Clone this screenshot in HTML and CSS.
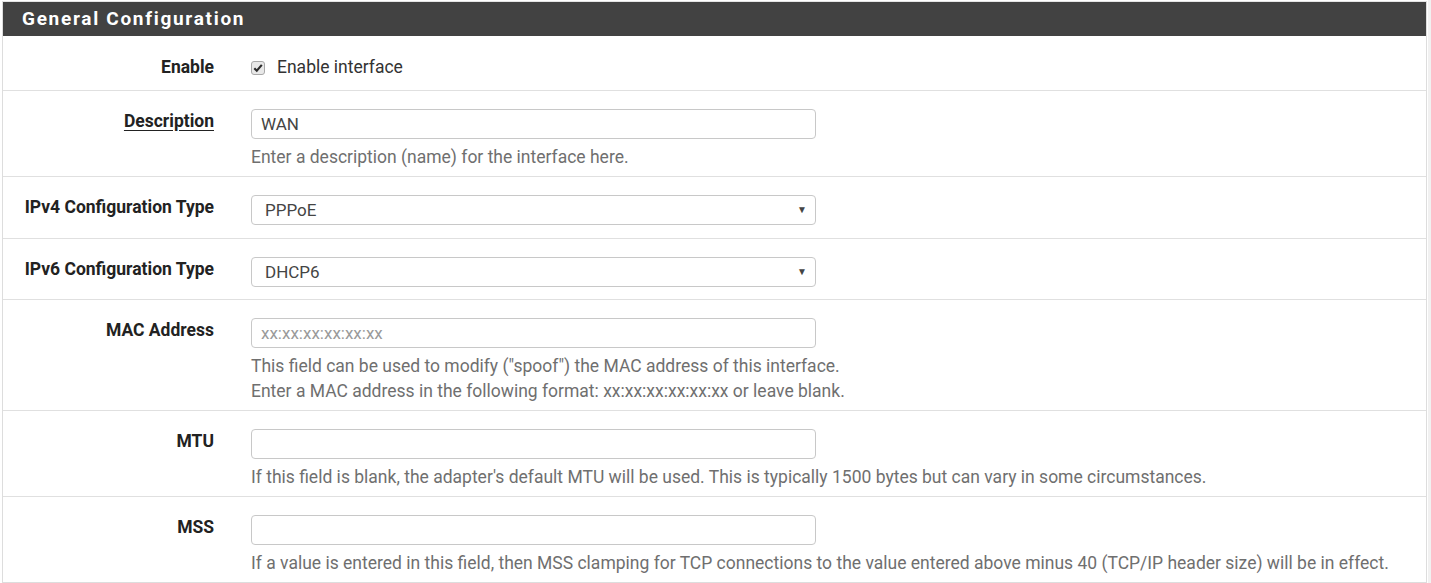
FILE: index.html
```html
<!DOCTYPE html>
<html>
<head>
<meta charset="utf-8">
<link rel="stylesheet" href="styles.css">
</head>
<body>
<div class="page">
  <div class="panel">
    <div class="panel-heading"><h2 class="panel-title">General Configuration</h2></div>
    <div class="panel-body">
      <div class="row row-check">
        <div class="label">Enable</div>
        <div class="field">
          <label class="check"><span class="box"><svg viewBox="0 0 14 14" width="14" height="14"><path d="M3.3 7.2 L5.8 9.8 L10.8 3.9" fill="none" stroke="#2b2b2b" stroke-width="2.1"/></svg></span>Enable interface</label>
        </div>
      </div>
      <div class="row">
        <div class="label"><span class="u">Description</span></div>
        <div class="field">
          <div class="input">WAN</div>
          <div class="help">Enter a description (name) for the interface here.</div>
        </div>
      </div>
      <div class="row row-tall">
        <div class="label">IPv4 Configuration Type</div>
        <div class="field">
          <div class="input select"><span>PPPoE</span><span class="caret">▼</span></div>
        </div>
      </div>
      <div class="row">
        <div class="label">IPv6 Configuration Type</div>
        <div class="field">
          <div class="input select"><span>DHCP6</span><span class="caret">▼</span></div>
        </div>
      </div>
      <div class="row">
        <div class="label">MAC Address</div>
        <div class="field">
          <div class="input placeholder">xx:xx:xx:xx:xx:xx</div>
          <div class="help">This field can be used to modify ("spoof") the MAC address of this interface.<br>Enter a MAC address in the following format: xx:xx:xx:xx:xx:xx or leave blank.</div>
        </div>
      </div>
      <div class="row">
        <div class="label">MTU</div>
        <div class="field">
          <div class="input"></div>
          <div class="help">If this field is blank, the adapter's default MTU will be used. This is typically 1500 bytes but can vary in some circumstances.</div>
        </div>
      </div>
      <div class="row">
        <div class="label">MSS</div>
        <div class="field">
          <div class="input"></div>
          <div class="help">If a value is entered in this field, then MSS clamping for TCP connections to the value entered above minus 40 (TCP/IP header size) will be in effect.</div>
        </div>
      </div>
    </div>
  </div>
</div>
</body>
</html>
```

FILE: styles.css
```css
html { background: #f1f1f1; }
body {
  margin: 0;
  font-family: Roboto, "Liberation Sans", sans-serif;
  font-size: 17.5px;
  color: #222;
  overflow: hidden;
}
.page {
  width: 1428px;
  height: 583px;
  background: #fff;
  padding: 1px 0 0 2px;
  box-sizing: border-box;
}
.panel {
  width: 1425px;
  border: 1px solid #ddd;
  border-top: none;
  box-sizing: border-box;
}
.panel-heading {
  background: #424242;
  height: 35px;
  border-top: 1px solid #e4e4e4;
  box-sizing: border-box;
  display: flex;
  align-items: center;
  padding-left: 19px;
}
.panel-title {
  margin: 0;
  color: #fff;
  font-size: 19px;
  font-weight: 700;
  letter-spacing: 1.7px;
  line-height: 24px;
}
.row {
  display: grid;
  grid-template-columns: 211px 1fr;
  column-gap: 37px;
  padding: 18px 0 6px;
  border-top: 1px solid #e0e0e0;
}
.row:first-child { border-top: none; }
.row-check { padding-top: 19px; padding-bottom: 10px; }
.row-tall { padding-bottom: 7px; }
.label {
  text-align: right;
  font-weight: 700;
  line-height: 25px;
  color: #222;
}
.label .u { text-decoration: underline; text-underline-offset: 3px; }
.input {
  width: 565px;
  height: 30px;
  box-sizing: border-box;
  border: 1px solid #c8c8c8;
  border-radius: 4px;
  padding: 0 9px;
  line-height: 28px;
  color: #444;
  font-size: 17px;
  margin-bottom: 6px;
}
.select {
  display: flex;
  justify-content: space-between;
  align-items: center;
  padding: 0 8px 0 13px;
}
.caret { font-size: 10px; color: #444; }
.placeholder { color: #9a9a9a; }
.help {
  color: #6f6f6f;
  line-height: 25px;
}
.check {
  display: flex;
  align-items: center;
  line-height: 25px;
  color: #333;
}
.box {
  width: 14px;
  height: 14px;
  box-sizing: border-box;
  border: 1px solid #a8a8a8;
  border-radius: 3px;
  background: #e8e8e8;
  margin-right: 12px;
  display: flex;
}
.box svg { display: block; margin: -1px; }
```
